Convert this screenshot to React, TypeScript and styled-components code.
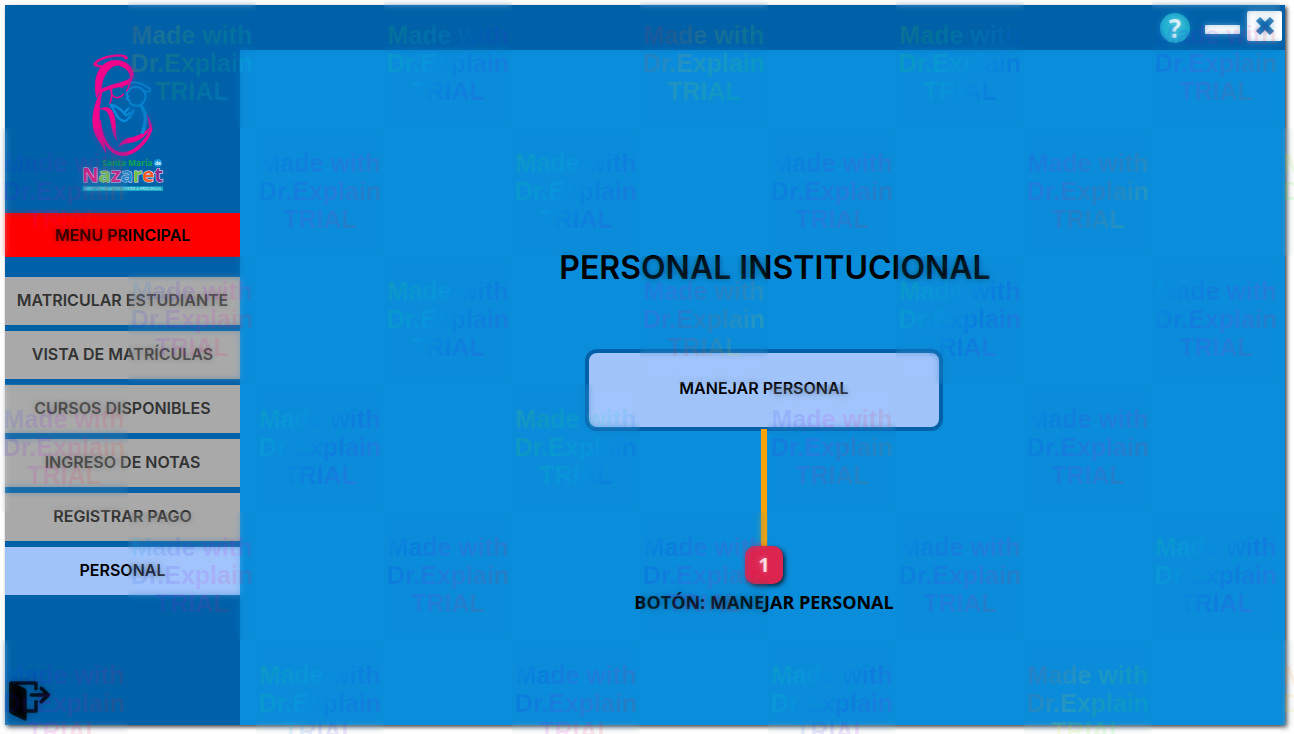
import React from "react";
import styled, { createGlobalStyle, css } from "styled-components";

const NAVY = "#0061a9";
const SKY = "#0a8dda";
const ICE = "#a0c4fa";

const GlobalStyle = createGlobalStyle`
  *, *::before, *::after { box-sizing: border-box; }
  body { margin: 0; background: #fff; font-family: Inter, "Liberation Sans", sans-serif; }
  button { font: inherit; cursor: pointer; }
`;

const Page = styled.div`
  position: relative;
  display: flex;
  min-height: 100vh;
  padding: 5px 9px 9px 5px;
  overflow: hidden;
`;

const AppWindow = styled.div`
  flex: 1;
  display: flex;
  background: ${SKY};
  box-shadow: 2px 2px 4px rgba(0, 0, 0, 0.75);
`;

const Sidebar = styled.aside`
  flex: 0 0 235px;
  display: flex;
  flex-direction: column;
  padding-top: 46px;
  background: ${NAVY};
`;

const LogoSvg = styled.svg`
  display: block;
  align-self: center;
  width: 105px;
  height: 141px;
`;

const MenuTitle = styled.h2`
  margin: 21px 0 20px;
  background: #f00;
  color: #000;
  font-size: 16px;
  font-weight: 600;
  line-height: 44px;
  text-align: center;
`;

const Menu = styled.nav`
  display: flex;
  flex-direction: column;
  gap: 6px;
`;

const MenuButton = styled.button<{ $active?: boolean }>`
  height: 48px;
  padding: 0 0 2px;
  border: 0;
  background: #a9a9a9;
  color: #333;
  font-size: 16px;
  font-weight: 600;
  white-space: nowrap;
  ${(p) => p.$active && css`
    background: ${ICE};
    color: #000;
  `}
`;

const ExitButton = styled.button`
  align-self: flex-start;
  margin: auto 0 4px 4px;
  padding: 0;
  border: 0;
  background: none;
  svg { display: block; }
`;

const Content = styled.div`
  flex: 1;
  display: flex;
  flex-direction: column;
`;

const TitleBar = styled.header`
  display: flex;
  align-items: center;
  justify-content: flex-end;
  height: 45px;
  padding-right: 3px;
  background: ${NAVY};
`;

const HelpButton = styled.button`
  width: 30px;
  height: 30px;
  margin-right: 15px;
  padding: 0;
  border: 0;
  border-radius: 50%;
  background: #22b2d2;
  color: #fff;
  font-family: "Open Sans", sans-serif;
  font-size: 26px;
  font-weight: 700;
  line-height: 28px;
`;

const MinimizeButton = styled.button`
  width: 35px;
  height: 9px;
  margin: 4px 7px 0 0;
  padding: 0;
  border: 0;
  border-radius: 1px;
  background: #fff;
`;

const CloseButton = styled.button`
  display: grid;
  place-items: center;
  width: 35px;
  height: 30px;
  margin-bottom: 4px;
  padding: 0;
  border: 0;
  border-radius: 2px;
  background: #fff;
`;

const Main = styled.main`
  flex: 1;
  display: flex;
  flex-direction: column;
  align-items: center;
  padding: 198px 0 0 3px;
`;

const Heading = styled.h1`
  margin: 0 0 61px;
  padding-left: 22px;
  color: #000;
  font-size: 32px;
  font-weight: 600;
  line-height: 40px;
`;

const ActionButton = styled.button`
  width: 358px;
  height: 82px;
  padding: 0 0 4px;
  border: 4px solid ${NAVY};
  border-radius: 12px;
  background: ${ICE};
  color: #000;
  font-size: 16px;
  font-weight: 600;
`;

const Connector = styled.div`
  width: 6px;
  height: 117px;
  margin-top: -2px;
  background: #f5a30a;
`;

const StepBadge = styled.span`
  width: 38px;
  height: 38px;
  border-radius: 10px;
  background: #dc2450;
  box-shadow: 2px 2px 4px rgba(0, 0, 0, 0.7);
  color: #fff;
  font-family: "Open Sans", sans-serif;
  font-size: 20px;
  font-weight: 700;
  line-height: 38px;
  text-align: center;
`;

const StepLabel = styled.p`
  margin: 6px 0 0;
  color: #000;
  font-family: "Open Sans", sans-serif;
  font-size: 18px;
  font-weight: 700;
  line-height: 24px;
`;

const WatermarkLayer = styled.div`
  position: absolute;
  inset: 0;
  display: grid;
  grid-template-columns: repeat(11, 128px);
  grid-auto-rows: 128px;
  overflow: hidden;
  pointer-events: none;
`;

const Tile = styled.div<{ $col: number; $row: number }>`
  position: relative;
  grid-column: ${(p) => p.$col + 1};
  grid-row: ${(p) => p.$row + 1};
  padding-top: 21px;

  &::before {
    content: "";
    position: absolute;
    inset: 0;
    backdrop-filter: blur(3px);
    opacity: 0.35;
  }
`;

const TileText = styled.p<{ $hue: number }>`
  position: relative;
  margin: 0;
  color: transparent;
  background-image: linear-gradient(
    125deg,
    ${(p) => [0, 40, 80, 120, 160, 200].map((d) => `hsl(${p.$hue + d} 90% 50%)`).join(", ")}
  );
  background-clip: text;
  font-family: "Liberation Sans", sans-serif;
  font-size: 25px;
  font-weight: 700;
  line-height: 28px;
  text-align: center;
  white-space: pre;
  opacity: 0.11;
`;

// Starting hue of each tile, row by row; odd rows begin at the left edge.
const tileHues = [
  [20, 110, 330, 80, 210],
  [210, 190, 110, 190, 250, 70],
  [190, 110, 260, 120, 180],
  [210, 130, 70, 220, 190],
  [180, 200, 200, 190, 130],
  [200, 110, 200, 130, 340, 10],
];

const menuItems = [
  "MATRICULAR ESTUDIANTE",
  "VISTA DE MATRÍCULAS",
  "CURSOS DISPONIBLES",
  "INGRESO DE NOTAS",
  "REGISTRAR PAGO",
  "PERSONAL",
];

const Logo = () => (
  <LogoSvg viewBox="0 18 315 423" role="img" aria-label="Santa María de Nazaret">
    <g fill="#f0058c" stroke="#f0058c" strokeWidth="2" strokeLinejoin="round">
      <path d="M172 42C178 24 118 26 86 43C64 55 66 68 96 66L97 61C74 62 76 54 92 46C122 32 168 30 164 42Z" />
      <path d="M80 158C66 100 88 50 132 46C166 44 190 66 190 88C190 98 186 104 182 108C184 92 178 72 150 62C124 54 100 92 96 116C94 128 92 132 92 138C86 144 82 150 80 158Z" />
      <path d="M184 98C160 116 118 116 90 136C94 138 88 146 96 142C124 124 162 130 184 110Z" />
      <path d="M98 128C82 158 62 200 70 248C76 280 98 296 107 324C106 302 94 270 90 240C84 200 92 164 98 128Z" />
      <path d="M90 192C108 182 124 188 130 206C140 232 134 258 140 286C124 262 126 232 116 208C110 196 104 194 90 192Z" />
      <path d="M92 226C94 262 110 314 150 322C190 328 226 284 240 254C238 240 236 230 233 212C240 228 248 244 246 256C232 296 190 342 144 330C104 318 86 262 92 226Z" />
      <path d="M148 306C150 290 164 282 184 278C206 274 226 260 242 246C230 272 208 288 184 292C166 296 154 296 148 306Z" />
    </g>
    <g fill="none" stroke="#f0058c" strokeLinecap="round">
      <path d="M180 108C178 122 176 132 170 138M124 132C122 152 132 160 146 157C152 156 156 152 160 148M122 132C126 146 126 160 120 174" strokeWidth="5" />
      <path d="M145 123C150 128 156 128 161 126" strokeWidth="3" />
    </g>
    <g fill="none" stroke="#0a8ad8" strokeLinecap="round" strokeLinejoin="round">
      <path d="M184 114C200 106 246 128 240 138C236 142 228 140 222 138" strokeWidth="5" />
      <path d="M176 138C184 122 212 122 222 140C234 158 220 182 200 182C186 182 178 176 178 166L170 160L176 154C168 154 168 144 176 138Z" strokeWidth="6" />
      <path d="M122 180C140 182 150 190 162 204L176 190M122 180C136 194 136 224 164 229C178 222 184 212 190 196M162 204C166 212 172 212 178 204" strokeWidth="7" />
      <path d="M214 184C230 204 228 234 218 262" strokeWidth="10" />
    </g>
    <text x="97" y="362" fill="#0fa651" fontFamily="Open Sans, sans-serif" fontWeight="700" fontSize="25">Santa María</text>
    <circle cx="264" cy="354" r="12" fill="#1597dc" />
    <text x="264" y="360" fill="#fff" textAnchor="middle" fontFamily="Lato, sans-serif" fontWeight="700" fontSize="16">de</text>
    <text x="36" y="411" fontFamily="Open Sans, sans-serif" fontWeight="700" fontSize="61" stroke="#f3e6f5" strokeWidth="3" paintOrder="stroke">
      <tspan fill="#e5127d">N</tspan>
      <tspan fill="#6fbe44">a</tspan>
      <tspan fill="#e5127d">z</tspan>
      <tspan fill="#2389ce">a</tspan>
      <tspan fill="#6fbe44">r</tspan>
      <tspan fill="#f15a24">e</tspan>
      <tspan fill="#8b2a92">t</tspan>
    </text>
    <rect x="38" y="424" width="241" height="14" fill="#19a9c6" />
    <text x="159" y="435" fill="#c9f2f7" textAnchor="middle" fontFamily="Lato, sans-serif" fontSize="11">EARLY STIMULATION CENTER &amp; PRESCHOOL</text>
  </LogoSvg>
);

const ExitIcon = () => (
  <svg width="41" height="40" viewBox="0 0 123 120" aria-hidden="true">
    <path d="M0 6Q2 1 8 3L48 22Q53 25 53 30V114Q52 121 45 118L5 98Q0 95 0 90Z" fill="#000" />
    <path d="M5 6H81V28M81 58V90H50" fill="none" stroke="#000" strokeWidth="10" strokeLinejoin="round" />
    <path d="M67 42H116M97 22L118 42L97 62" fill="none" stroke="#000" strokeWidth="11" strokeLinecap="round" strokeLinejoin="round" />
  </svg>
);

export default function App() {
  return (
    <Page>
      <GlobalStyle />
      <AppWindow>
        <Sidebar>
          <Logo />
          <MenuTitle>MENU PRINCIPAL</MenuTitle>
          <Menu aria-label="Menu principal">
            {menuItems.map((item) => (
              <MenuButton key={item} type="button" $active={item === "PERSONAL"}>
                {item}
              </MenuButton>
            ))}
          </Menu>
          <ExitButton type="button" aria-label="Salir">
            <ExitIcon />
          </ExitButton>
        </Sidebar>
        <Content>
          <TitleBar>
            <HelpButton type="button" aria-label="Ayuda">?</HelpButton>
            <MinimizeButton type="button" aria-label="Minimizar" />
            <CloseButton type="button" aria-label="Cerrar">
              <svg width="20" height="20" viewBox="0 0 20 20" aria-hidden="true">
                <path d="M3 3L17 17M17 3L3 17" stroke={NAVY} strokeWidth="6" />
              </svg>
            </CloseButton>
          </TitleBar>
          <Main>
            <Heading>PERSONAL INSTITUCIONAL</Heading>
            <ActionButton type="button">MANEJAR PERSONAL</ActionButton>
            <Connector />
            <StepBadge>1</StepBadge>
            <StepLabel>BOTÓN: MANEJAR PERSONAL</StepLabel>
          </Main>
        </Content>
      </AppWindow>
      <WatermarkLayer aria-hidden="true">
        {tileHues.map((hues, row) =>
          hues.map((hue, i) => (
            <Tile key={`${row}-${i}`} $row={row} $col={i * 2 + (row % 2 === 0 ? 1 : 0)}>
              <TileText $hue={hue}>{"Made with\nDr.Explain\nTRIAL"}</TileText>
            </Tile>
          ))
        )}
      </WatermarkLayer>
    </Page>
  );
}
